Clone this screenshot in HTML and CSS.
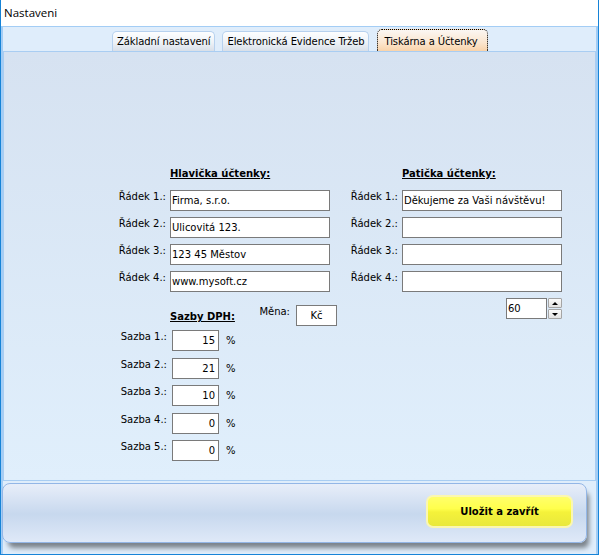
FILE: index.html
```html
<!DOCTYPE html>
<html lang="cs">
<head>
    <meta charset="UTF-8">
    <title>Nastaveni</title>
    <link rel="stylesheet" href="styles.css">
</head>
<body>
<div class="window">
    <div class="titlebar">Nastaveni</div>

    <div class="frame">
        <div class="tabstrip">
            <div class="tab">Základní nastavení</div>
            <div class="tab">Elektronická Evidence Tržeb</div>
            <div class="tab active">Tiskárna a Účtenky</div>
        </div>

        <div class="tabpanel">
            <div class="columns">
                <div class="col-left">
                    <div class="group">
                        <div class="group-title">Hlavička účtenky:</div>
                        <div class="field-row"><label>Řádek 1.:</label><input class="text" value="Firma, s.r.o."></div>
                        <div class="field-row"><label>Řádek 2.:</label><input class="text" value="Ulicovitá 123."></div>
                        <div class="field-row"><label>Řádek 3.:</label><input class="text" value="123 45 Městov"></div>
                        <div class="field-row"><label>Řádek 4.:</label><input class="text" value="www.mysoft.cz"></div>
                    </div>

                    <div class="vat-section">
                        <div class="vat">
                            <div class="group-title">Sazby DPH:</div>
                            <div class="vat-row"><label>Sazba 1.:</label><input class="num" value="15"><span class="pct">%</span></div>
                            <div class="vat-row"><label>Sazba 2.:</label><input class="num" value="21"><span class="pct">%</span></div>
                            <div class="vat-row"><label>Sazba 3.:</label><input class="num" value="10"><span class="pct">%</span></div>
                            <div class="vat-row"><label>Sazba 4.:</label><input class="num" value="0"><span class="pct">%</span></div>
                            <div class="vat-row"><label>Sazba 5.:</label><input class="num" value="0"><span class="pct">%</span></div>
                        </div>
                        <div class="currency">
                            <label>Měna:</label>
                            <input class="short" value="Kč">
                        </div>
                    </div>
                </div>

                <div class="col-right">
                    <div class="group">
                        <div class="group-title">Patička účtenky:</div>
                        <div class="field-row"><label>Řádek 1.:</label><input class="text" value="Děkujeme za Vaši návštěvu!"></div>
                        <div class="field-row"><label>Řádek 2.:</label><input class="text" value=""></div>
                        <div class="field-row"><label>Řádek 3.:</label><input class="text" value=""></div>
                        <div class="field-row"><label>Řádek 4.:</label><input class="text" value=""></div>
                    </div>
                    <div class="spin-row">
                        <input class="spin-value" value="60">
                        <div class="spin-buttons">
                            <button class="spin-btn"><span class="arrow-up"></span></button>
                            <button class="spin-btn"><span class="arrow-down"></span></button>
                        </div>
                    </div>
                </div>
            </div>
        </div>

        <div class="footer">
            <div class="savebar">
                <button class="save">Uložit a zavřít</button>
            </div>
        </div>
    </div>
</div>
</body>
</html>
```

FILE: styles.css
```css
body {
    margin: 0;
    font-family: "DejaVu Sans", Verdana, sans-serif;
    font-size: 10px;
    color: #000;
}

.window {
    width: 599px;
    height: 555px;
    box-sizing: border-box;
    border: 1px solid #1683d7;
    border-top: 0;
    background: #fff;
    display: flex;
    flex-direction: column;
}

.titlebar {
    height: 27px;
    padding: 5px 0 0 3px;
    box-sizing: border-box;
    font-family: "Open Sans", sans-serif;
    font-size: 11.5px;
    line-height: 16px;
    border-bottom: 1px solid #a3cdf5;
}

.frame {
    flex: 1;
    display: flex;
    flex-direction: column;
    border-left: 2px solid #a3cdf5;
    border-right: 2px solid #a3cdf5;
    background: #dfedfb;
}

/* tabs */
.tabstrip {
    height: 24px;
    display: flex;
    align-items: flex-end;
    padding-left: 109px;
}

.tab {
    height: 20px;
    box-sizing: border-box;
    padding: 0 4px 0 4px;
    margin-right: 7px;
    line-height: 19px;
    letter-spacing: -0.1px;
    white-space: nowrap;
    border: 1px solid #b7d1ee;
    border-bottom: 0;
    border-radius: 5px 5px 0 0;
    background: linear-gradient(#fdfeff, #eef2f7 55%, #d8dfe8);
}

.tab:nth-child(2) {
    margin-right: 8px;
}

.tab.active {
    height: 22px;
    padding: 2px 9px 0 6px;
    border: 1px dotted #000;
    border-bottom: 0;
    background: linear-gradient(#fbf7f3, #fbe6cf 60%, #f9d3aa);
}

.tabpanel {
    height: 430px;
    box-sizing: border-box;
    border: 1px solid #a9cdf2;
    background: linear-gradient(#d6e2f1, #e0effc);
    padding: 115px 0 0 112px;
}

.columns {
    display: flex;
    gap: 11px;
}

.col-left {
    width: 221px;
}

.col-right {
    width: 214px;
}

.group-title {
    margin: 0 0 10px 54px;
    font-weight: bold;
    text-decoration: underline;
    line-height: 13px;
}

label {
    flex: none;
    line-height: 13px;
    text-align: right;
    white-space: nowrap;
}

input {
    box-sizing: border-box;
    height: 21px;
    border: 1px solid #7a7a7a;
    border-radius: 0;
    background: #fff;
    font: inherit;
    color: #000;
    outline: none;
}

.field-row {
    display: flex;
    gap: 4px;
    margin-bottom: 6px;
}

.field-row label {
    width: 50px;
}

.text {
    width: 160px;
    padding: 0 1px;
}

/* DPH rates + currency */
.vat-section {
    display: flex;
    align-items: flex-start;
    margin-top: 13px;
}

.vat .group-title {
    margin: 5px 0 7px 54px;
}

.vat-row {
    display: flex;
    align-items: flex-start;
    gap: 5px;
    margin-bottom: 6.5px;
}

.vat-row label {
    width: 51px;
}

.num {
    width: 47px;
    padding: 0 3px 0 0;
    text-align: right;
}

.pct {
    align-self: center;
    margin-left: 2px;
}

.currency {
    margin-left: auto;
    display: flex;
    gap: 6px;
}

.short {
    width: 41px;
    text-align: center;
    padding: 0;
}

/* spinner under the footer lines */
.spin-row {
    display: flex;
    justify-content: flex-end;
}

.spin-value {
    width: 41px;
    padding: 0 1px;
}

.spin-buttons {
    display: flex;
    flex-direction: column;
    gap: 1px;
    margin-left: 1px;
}

.spin-btn {
    width: 14px;
    height: 10px;
    padding: 0;
    border: 1px solid #a5a5a5;
    border-radius: 1px;
    background: linear-gradient(#fbfbfb, #e2e2e2);
    display: flex;
    align-items: center;
    justify-content: center;
}

.arrow-up,
.arrow-down {
    width: 0;
    height: 0;
    border-left: 3px solid transparent;
    border-right: 3px solid transparent;
}

.arrow-up {
    border-bottom: 3px solid #000;
}

.arrow-down {
    border-top: 3px solid #000;
}

/* bottom bar */
.footer {
    flex: 1;
    padding-top: 2px;
}

.savebar {
    margin-left: -1px;
    width: 585px;
    height: 60px;
    box-sizing: border-box;
    padding: 11px 13px 0 0;
    display: flex;
    justify-content: flex-end;
    align-items: flex-start;
    border: 1px solid #93b6e6;
    border-radius: 8px;
    background: linear-gradient(#e8eef9, #c7d8ee 52%, #dfe9f8);
    box-shadow: 4px 7px 5px -2px rgba(0, 0, 0, 0.45);
}

.save {
    width: 147px;
    height: 33px;
    padding: 0;
    border: 2px solid #fbf7b0;
    border-radius: 7px;
    background: linear-gradient(#ffff6a, #ffff4c 40%, #f4f23a 52%, #e9e83c);
    font-family: inherit;
    font-size: 10px;
    font-weight: bold;
    line-height: 29px;
    color: #000;
    cursor: pointer;
}
```
